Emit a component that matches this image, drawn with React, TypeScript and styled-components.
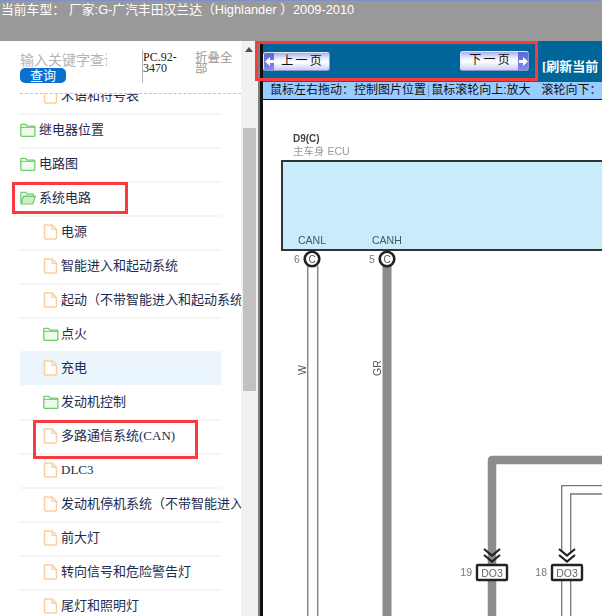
import React from "react";
import styled, { createGlobalStyle } from "styled-components";

const Global = createGlobalStyle`
  html, body { margin: 0; padding: 0; background: #fff; }
  body { font-family: "Liberation Sans", "Noto Sans CJK SC", sans-serif; }
  * { box-sizing: border-box; }
`;

const Page = styled.div`
  position: relative;
  width: 602px;
  height: 616px;
  overflow: hidden;
  display: flex;
  flex-direction: column;
`;
const Header = styled.header`
  height: 41px;
  flex: none;
  background: #999999;
  border-top: 1px solid #7f8fc8;
  color: #fff;
  font-size: 12.8px;
  line-height: 18px;
  padding: 0 0 0 1px;
  white-space: nowrap;
`;
const Maker = styled.span`
  margin-left: 4px;
`;
const Body = styled.div`
  flex: 1;
  min-height: 0;
  display: flex;
`;
const Sidebar = styled.aside`
  width: 241px;
  flex: none;
  overflow: hidden;
  display: flex;
  flex-direction: column;
`;
const SearchBar = styled.div`
  height: 53px;
  flex: none;
  margin-left: 20px;
  border-bottom: 1px dashed #c4c4c4;
  display: flex;
  padding-top: 9px;
`;
const SearchBox = styled.div`
  width: 122px;
  flex: none;
  display: flex;
  flex-direction: column;
  align-items: flex-start;
`;
const Keyword = styled.div`
  width: 87px;
  height: 18px;
  overflow: hidden;
  white-space: nowrap;
  font-size: 14px;
  line-height: 20px;
  color: #b5b5b5;
`;
const QueryButton = styled.button`
  width: 46px;
  height: 15px;
  border: 0;
  border-radius: 5px;
  padding: 0;
  background: #0a6fcf;
  color: #fff;
  font: 13px/15px "Liberation Sans", "Noto Sans CJK SC", sans-serif;
`;
const Version = styled.div`
  width: 53px;
  height: 33px;
  flex: none;
  border-left: 1px solid #b5b5b5;
  font: 12px/11px "Liberation Serif", "Noto Sans CJK SC", serif;
  color: #222;
  padding-top: 2px;
`;
const Collapse = styled.div`
  width: 38px;
  flex: none;
  font-size: 12.5px;
  line-height: 11px;
  color: #9a9a9a;
  padding-top: 3px;
`;
const Tree = styled.div`
  flex: 1;
  min-height: 0;
  overflow: hidden;
`;
const TreeInner = styled.ul`
  list-style: none;
  margin: -13px 0 0 20px;
  padding: 0;
  width: 201px;
`;
const Row = styled.li<{ $child?: boolean; $active?: boolean }>`
  height: 34px;
  display: flex;
  align-items: center;
  gap: ${(p) => (p.$child ? "2px" : "3px")};
  padding: 0 0 2px ${(p) => (p.$child ? "23px" : "0")};
  border-bottom: 2px solid #f5f5f5;
  white-space: nowrap;
  font: 13px/18px "Liberation Serif", "Noto Sans CJK SC", serif;
  color: #1c2b4f;
  background: ${(p) => (p.$active ? "#eaf5fd" : "transparent")};
  border-bottom-color: ${(p) => (p.$active ? "#ffffff" : "#f5f5f5")};
`;
const Icon = styled.svg`
  width: 16px;
  height: 16px;
  flex: none;
`;
const Scrollbar = styled.div`
  width: 19px;
  flex: none;
  background: #f1f1f1;
  border-right: 2px solid #808080;
  position: relative;
`;
const ScrollArrow = styled.div`
  position: absolute;
  left: 4px;
  top: 6px;
  border-left: 4px solid transparent;
  border-right: 4px solid transparent;
  border-bottom: 5px solid #505050;
`;
const ScrollThumb = styled.div`
  position: absolute;
  left: 2px;
  top: 87px;
  width: 13px;
  height: 263px;
  background: #c1c1c1;
`;
const Main = styled.main`
  flex: 1;
  min-width: 0;
  background: #fff;
  border-left: 3px solid #111;
  display: flex;
  flex-direction: column;
`;
const Pager = styled.div`
  height: 41px;
  flex: none;
  background: #006699;
  display: flex;
  align-items: center;
  padding: 0;
  white-space: nowrap;
`;
const PageButton = styled.button<{ $next?: boolean }>`
  width: ${(p) => (p.$next ? "69px" : "67px")};
  height: ${(p) => (p.$next ? "20px" : "19px")};
  flex: none;
  padding: 0;
  display: flex;
  flex-direction: ${(p) => (p.$next ? "row-reverse" : "row")};
  align-items: stretch;
  border: 1px solid #e4e6fa;
  border-right-color: #8f96d6;
  border-bottom-color: #8f96d6;
  border-radius: 3px;
  background: linear-gradient(#a9afe8, #eef0fd 35%, #ffffff 55%, #c9cdf2);
  color: #111;
  margin: ${(p) => (p.$next ? "-1px 0 0 130px" : "0")};
  overflow: hidden;
`;
const PageArrow = styled.span`
  width: 10px;
  flex: none;
  background: linear-gradient(#5c68d8, #7e8ae8);
  display: flex;
  align-items: center;
  justify-content: center;
`;
const PageLabel = styled.span`
  flex: 1;
  font: 12px/17px "Liberation Sans", "Noto Sans CJK SC", sans-serif;
  word-spacing: -1px;
  text-align: center;
`;
const Refresh = styled.span`
  margin: 10px 0 0 13px;
  color: #fff;
  font: bold 13px/16px "Liberation Serif", "Noto Sans CJK SC", serif;
`;
const Hint = styled.div`
  height: 18px;
  flex: none;
  background: #99ccff;
  border-bottom: 1px solid #111;
  color: #111;
  font-size: 12px;
  line-height: 16px;
  padding-left: 7px;
  white-space: nowrap;
  overflow: hidden;
`;
const HintRule = styled.span`
  color: #6f8fc0;
  margin: 0 1px;
`;
const HintGap = styled.span`
  margin-left: 11px;
`;
const Diagram = styled.svg`
  flex: 1;
  min-height: 0;
  display: block;
  width: 100%;
  filter: blur(0.35px);
`;
const Highlight = styled.div<{ $x: number; $y: number; $w: number; $h: number }>`
  position: absolute;
  left: ${(p) => p.$x}px;
  top: ${(p) => p.$y}px;
  width: ${(p) => p.$w}px;
  height: ${(p) => p.$h}px;
  border: 3px solid #f93a3f;
  pointer-events: none;
`;

const FileIcon = () => (
  <Icon viewBox="0 0 16 16" fill="none">
    <path d="M1.500 1h7.500l4.500 4.500V14a1 1 0 0 1-1 1H2.500a1 1 0 0 1-1-1V1z" fill="#fff" stroke="#fbcf9d" strokeWidth="1.500" strokeLinejoin="round" />
    <path d="M9 1v4.500h4.500" stroke="#fbcf9d" strokeWidth="1.200" />
  </Icon>
);
const FolderIcon = () => (
  <Icon viewBox="0 0 16 16" fill="none">
    <path d="M.8 3.200c0-.5.3-.8.8-.8h4l1.600 1.800h6.900c.5 0 .8.3.8.8v8.600c0 .5-.3.800-.8.800H1.600c-.5 0-.8-.3-.8-.8V3.200z" fill="#f1f9f1" stroke="#6ccf68" strokeWidth="1.300" />
    <path d="M1 5.400h14" stroke="#6ccf68" strokeWidth="1" />
  </Icon>
);
const OpenFolderIcon = () => (
  <Icon viewBox="0 0 16 16" fill="none">
    <path d="M.8 3.200c0-.5.3-.8.8-.8h4l1.600 1.800h5.700c.5 0 .8.3.8.8v1.400H3.600L.9 13.600V3.200z" fill="#f1f9f1" stroke="#6ccf68" strokeWidth="1.200" />
    <path d="M3.500 6.400h11.900l-2.600 7.300a.6.6 0 0 1-.6.3H1.200l2.300-7.600z" fill="#cfeccb" stroke="#6ccf68" strokeWidth="1.200" />
  </Icon>
);

const items: { t: string; k: "file" | "folder" | "open"; child?: boolean; active?: boolean }[] = [
  { t: "术语和符号表", k: "file", child: true },
  { t: "继电器位置", k: "folder" },
  { t: "电路图", k: "folder" },
  { t: "系统电路", k: "open" },
  { t: "电源", k: "file", child: true },
  { t: "智能进入和起动系统", k: "file", child: true },
  { t: "起动（不带智能进入和起动系统）", k: "file", child: true },
  { t: "点火", k: "folder", child: true },
  { t: "充电", k: "file", child: true, active: true },
  { t: "发动机控制", k: "folder", child: true },
  { t: "多路通信系统(CAN)", k: "file", child: true },
  { t: "DLC3", k: "file", child: true },
  { t: "发动机停机系统（不带智能进入和起动系统）", k: "file", child: true },
  { t: "前大灯", k: "file", child: true },
  { t: "转向信号和危险警告灯", k: "file", child: true },
  { t: "尾灯和照明灯", k: "file", child: true },
];

const Arrow = ({ right }: { right?: boolean }) => (
  <svg width="9" height="9" viewBox="0 0 9 9">
    <path d={right ? "M0 3h4V0l5 4.500L4 9V6H0z" : "M9 3H5V0L0 4.500 5 9V6h4z"} fill="#fff" />
  </svg>
);

const labelStyle = { fontFamily: '"Liberation Sans", "Noto Sans CJK SC", sans-serif' };

const Connector = ({ x, pin }: { x: number; pin: string }) => (
  <g style={labelStyle}>
    <path d={`M${x - 8} 449l8 6.500 8-6.500M${x - 8} 455l8 6.500 8-6.500`} fill="none" stroke="#222" strokeWidth="2.200" />
    <rect x={x - 15} y={465} width={30} height={15} fill="#fff" stroke="#222" strokeWidth="2.400" rx="1" />
    <text x={x} y={476.500} fontSize="10.500" fill="#666" textAnchor="middle">DO3</text>
    <text x={x - 20} y={476} fontSize="10.500" fill="#777" textAnchor="end">{pin}</text>
  </g>
);

export default function App() {
  return (
    <Page>
      <Global />
      <Header>
        当前车型：<Maker>厂家:G-广汽丰田汉兰达（Highlander ）2009-2010</Maker>
      </Header>
      <Body>
        <Sidebar>
          <SearchBar>
            <SearchBox>
              <Keyword>输入关键字查询</Keyword>
              <QueryButton>查询</QueryButton>
            </SearchBox>
            <Version>PC.92-3470</Version>
            <Collapse>折叠全部</Collapse>
          </SearchBar>
          <Tree>
            <TreeInner>
              {items.map((it) => (
                <Row key={it.t} $child={it.child} $active={it.active}>
                  {it.k === "file" ? <FileIcon /> : it.k === "folder" ? <FolderIcon /> : <OpenFolderIcon />}
                  <span>{it.t}</span>
                </Row>
              ))}
            </TreeInner>
          </Tree>
        </Sidebar>
        <Scrollbar>
          <ScrollArrow />
          <ScrollThumb />
        </Scrollbar>
        <Main>
          <Pager>
            <PageButton>
              <PageArrow><Arrow /></PageArrow>
              <PageLabel>上 一 页</PageLabel>
            </PageButton>
            <PageButton $next>
              <PageArrow><Arrow right /></PageArrow>
              <PageLabel>下 一 页</PageLabel>
            </PageButton>
            <Refresh>[刷新当前</Refresh>
          </Pager>
          <Hint>
            鼠标左右拖动：控制图片位置<HintRule>|</HintRule>鼠标滚轮向上:放大<HintGap>滚轮向下：缩小</HintGap>
          </Hint>
          <Diagram viewBox="0 0 339 516" preserveAspectRatio="xMinYMin slice">
            <g style={labelStyle}>
              <text x="30" y="42" fontSize="10" fontWeight="bold" fill="#444">D9(C)</text>
              <text x="30" y="55" fontSize="10.500" fill="#999">主车身 ECU</text>
              <rect x="19" y="61" width="340" height="89" fill="#c8ecfa" stroke="#2f3436" strokeWidth="2" />
              <text x="35" y="144" fontSize="10.500" fill="#4a5560">CANL</text>
              <text x="109" y="144" fontSize="10.500" fill="#4a5560">CANH</text>
              <text x="31" y="163" fontSize="10.500" fill="#777">6</text>
              <text x="106" y="163" fontSize="10.500" fill="#777">5</text>

              <path d="M44.700 166V516M54.700 166V516" stroke="#8a8a8a" strokeWidth="1.500" fill="none" />
              <path d="M124 166V516" stroke="#8c8c8c" strokeWidth="9" fill="none" />
              <circle cx="49" cy="159" r="7.300" fill="#fff" stroke="#222" strokeWidth="2.600" />
              <circle cx="124" cy="159" r="7.300" fill="#fff" stroke="#222" strokeWidth="2.600" />
              <text x="49" y="162.500" fontSize="10" fill="#555" textAnchor="middle">C</text>
              <text x="124" y="162.500" fontSize="10" fill="#555" textAnchor="middle">C</text>
              <text transform="translate(43 275) rotate(-90)" fontSize="10.500" fill="#555">W</text>
              <text transform="translate(118 276) rotate(-90)" fontSize="10.500" fill="#555">GR</text>

              <path d="M229 516V360H339" fill="none" stroke="#8c8c8c" strokeWidth="8.500" strokeLinejoin="round" />
              <path d="M298.700 452V385.700H339M307.700 452V394H339" fill="none" stroke="#777" strokeWidth="1.300" />
              <path d="M298.700 480V516M307.700 480V516" fill="none" stroke="#777" strokeWidth="1.300" />
              <Connector x={229} pin="19" />
              <Connector x={304} pin="18" />
            </g>
          </Diagram>
        </Main>
      </Body>
      <Highlight $x={12} $y={182} $w={116} $h={32} />
      <Highlight $x={33} $y={420} $w={165} $h={39} />
      <Highlight $x={255} $y={41} $w={283} $h={40} />
    </Page>
  );
}
